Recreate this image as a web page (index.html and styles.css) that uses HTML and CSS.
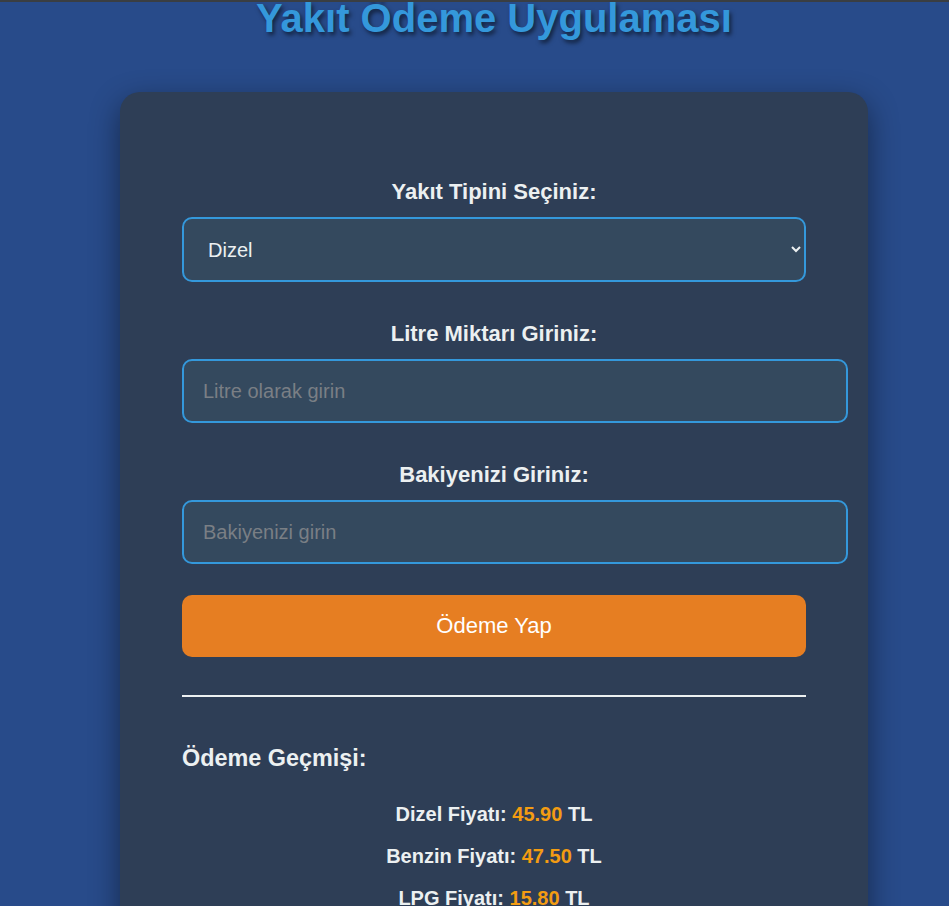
FILE: index.html
```html
<!DOCTYPE html>
<html lang="tr">
<head>
<meta charset="UTF-8">
<title>Yakıt Ödeme Uygulaması</title>
<link rel="stylesheet" href="styles.css">
</head>
<body>
  <div class="page">
    <h1 class="title">Yakıt Ödeme Uygulaması</h1>

    <div class="card">
      <label class="field-label" for="fuel">Yakıt Tipini Seçiniz:</label>
      <select id="fuel" class="field-select">
        <option>Dizel</option>
        <option>Benzin</option>
        <option>LPG</option>
      </select>

      <label class="field-label" for="liters">Litre Miktarı Giriniz:</label>
      <input id="liters" class="field-input" type="number" placeholder="Litre olarak girin">

      <label class="field-label" for="balance">Bakiyenizi Giriniz:</label>
      <input id="balance" class="field-input" type="number" placeholder="Bakiyenizi girin">

      <button class="pay-button" type="button">Ödeme Yap</button>

      <hr class="divider">

      <h3 class="history-title">Ödeme Geçmişi:</h3>

      <p class="price-line">Dizel Fiyatı: <span class="price">45.90</span> TL</p>
      <p class="price-line">Benzin Fiyatı: <span class="price">47.50</span> TL</p>
      <p class="price-line">LPG Fiyatı: <span class="price">15.80</span> TL</p>
    </div>
  </div>
</body>
</html>
```
FILE: styles.css
```css
html {
  background: #284b8a;
}

body {
  margin: 0;
  padding: 0 0 0 39px;
  font-family: "Liberation Sans", Arial, sans-serif;
  font-size: 20px;
  color: #ecf0f1;
  background: #284b8a;
  border-top: 2px solid #3a3e42;
  overflow: hidden;
}

.page {
  display: flex;
  flex-direction: column;
  align-items: center;
}

.title {
  margin: -6px 0 51px;
  font-size: 40px;
  font-weight: bold;
  line-height: normal;
  color: #3498db;
  text-shadow: 2px 3px 4px rgba(0, 0, 0, 0.55);
  text-align: center;
}

.card {
  box-sizing: border-box;
  width: 748px;
  padding: 87px 62px 40px;
  background: #2e3e56;
  border-radius: 20px;
  box-shadow: 0 10px 30px rgba(0, 0, 0, 0.45);
}

.field-label {
  display: block;
  margin-bottom: 13px;
  font-size: 22px;
  font-weight: bold;
  line-height: 25px;
  text-align: center;
  color: #ecf0f1;
}

.field-select {
  display: block;
  box-sizing: border-box;
  width: 100%;
  height: 65px;
  margin: 0 0 39px;
  padding: 0 28px 0 20px;
  font-family: inherit;
  font-size: 20px;
  color: #ecf0f1;
  background: #34495e;
  border: 2px solid #3498db;
  border-radius: 10px;
  outline: none;
}

.field-input {
  display: block;
  width: 100%;
  margin: 0 0 39px;
  padding: 18px 19px;
  font-family: inherit;
  font-size: 20px;
  line-height: 24px;
  color: #ecf0f1;
  background: #34495e;
  border: 2px solid #3498db;
  border-radius: 10px;
  outline: none;
}

.field-input::placeholder {
  color: #7a7f85;
}

.field-input + .field-label + .field-input {
  margin-bottom: 31px;
}

.pay-button {
  display: block;
  width: 100%;
  height: 62px;
  padding: 0;
  font-family: inherit;
  font-size: 22px;
  color: #ffffff;
  background: #e67e22;
  border: none;
  border-radius: 10px;
  cursor: pointer;
}

.divider {
  margin: 38px 0 0;
  height: 2px;
  border: none;
  background: #ecf0f1;
}

.history-title {
  margin: 48px 0 31px;
  font-size: 23.4px;
  font-weight: bold;
  line-height: 27px;
  text-align: left;
  color: #ecf0f1;
}

.price-line {
  margin: 0 0 19px;
  font-size: 20px;
  font-weight: bold;
  line-height: 23px;
  text-align: center;
  color: #ecf0f1;
}

.price {
  color: #f39c12;
}
```
